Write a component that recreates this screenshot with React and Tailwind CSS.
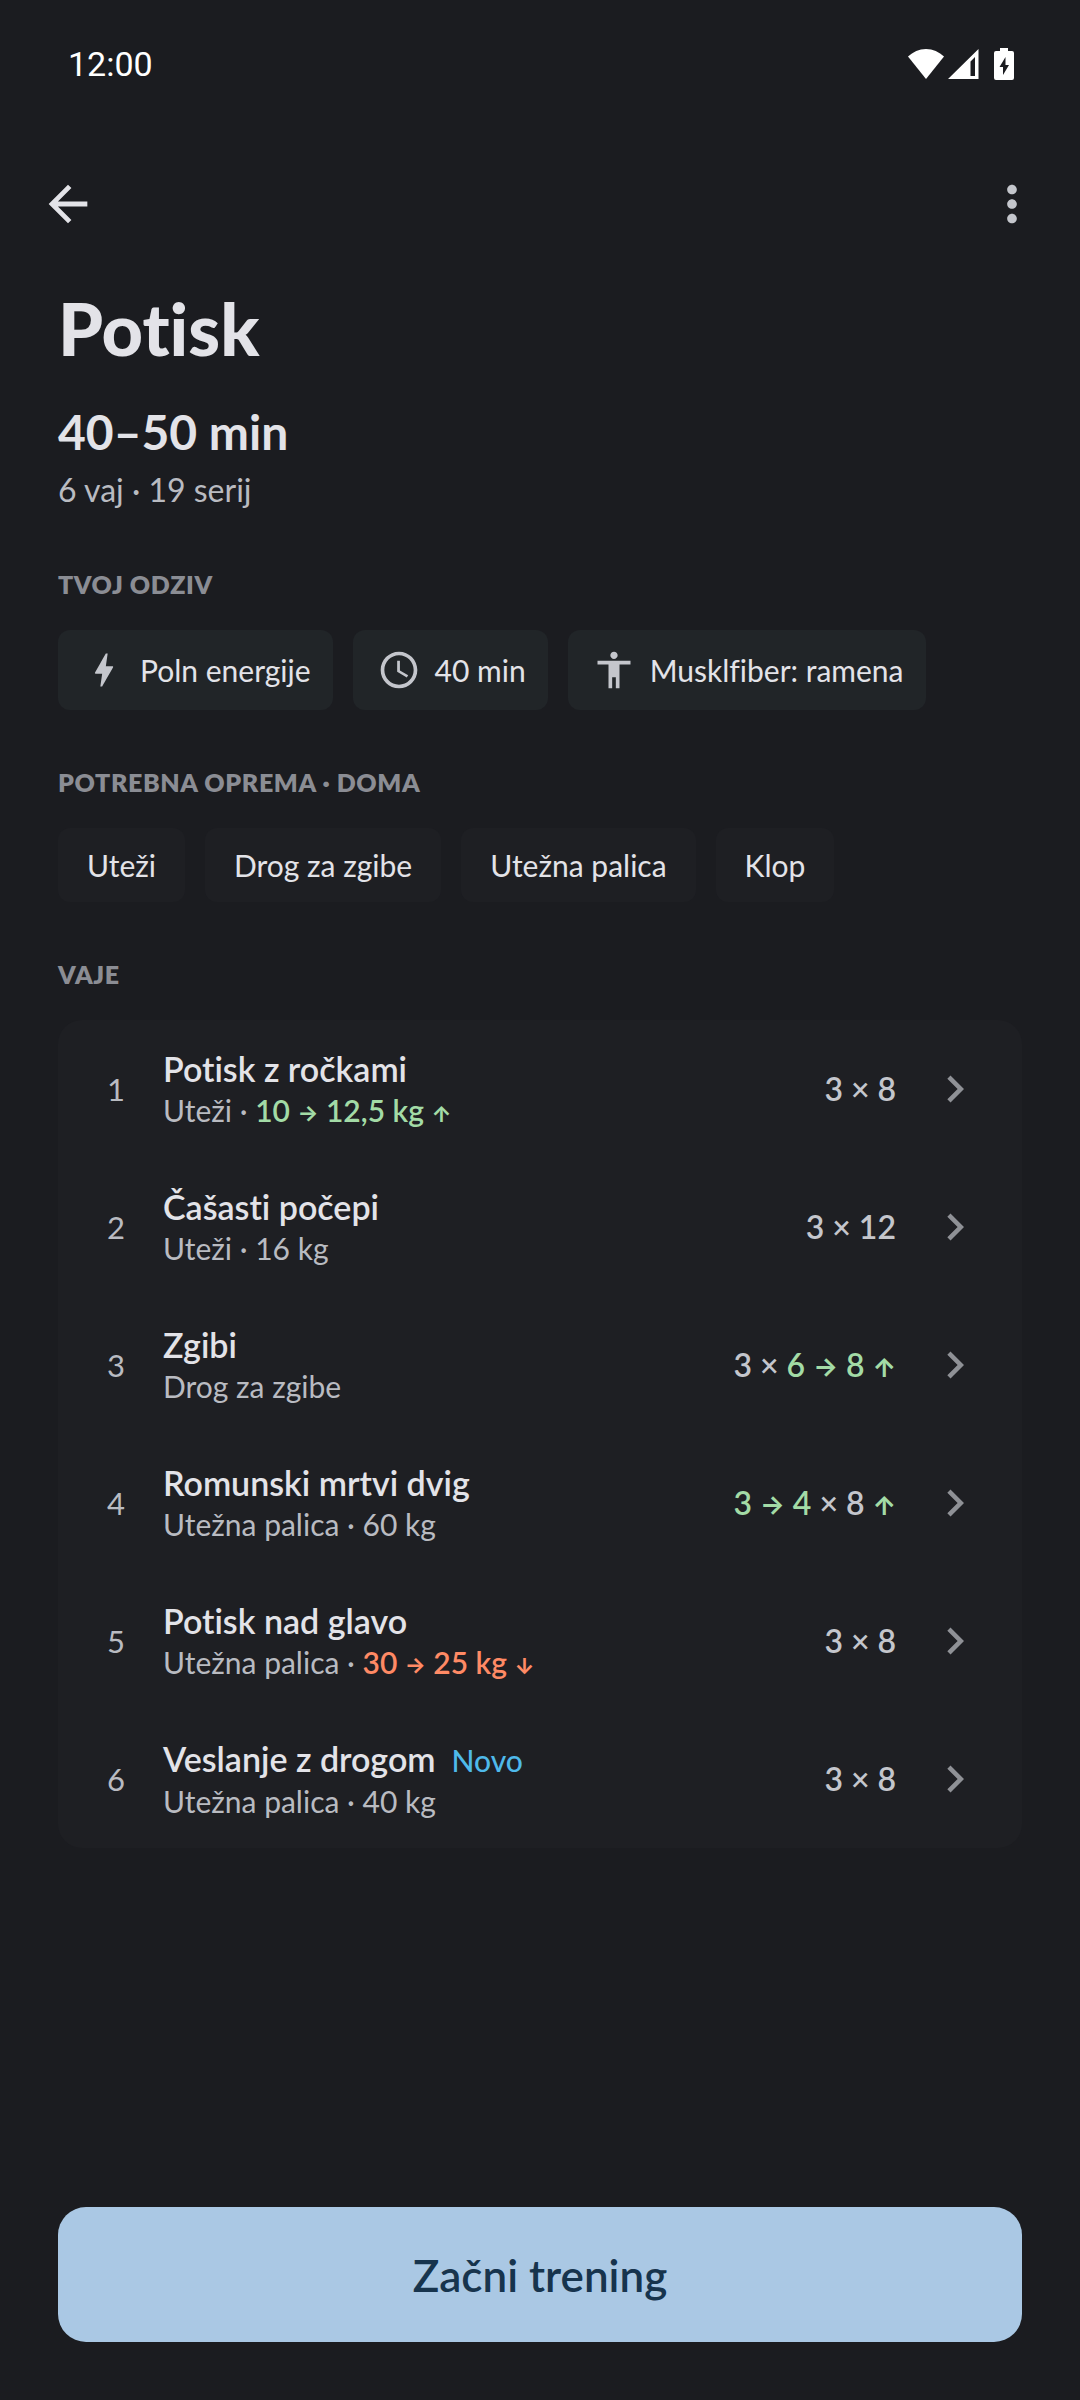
import { MdAccessibility, MdArrowBack, MdBolt, MdChevronRight, MdMoreVert, MdSchedule } from 'react-icons/md';

const feedback = [
  { icon: MdBolt, label: 'Poln energije' },
  { icon: MdSchedule, label: '40 min' },
  { icon: MdAccessibility, label: 'Musklfiber: ramena' },
];

const equipment = ['Uteži', 'Drog za zgibe', 'Utežna palica', 'Klop'];

const exercises = [
  {
    name: 'Potisk z ročkami',
    details: [{ text: 'Uteži · ' }, { text: '10 → 12,5 kg ↑', tone: 'up' }],
    sets: [{ text: '3 × 8' }],
  },
  {
    name: 'Čašasti počepi',
    details: [{ text: 'Uteži · 16 kg' }],
    sets: [{ text: '3 × 12' }],
  },
  {
    name: 'Zgibi',
    details: [{ text: 'Drog za zgibe' }],
    sets: [{ text: '3 × ' }, { text: '6 → 8 ↑', tone: 'up' }],
  },
  {
    name: 'Romunski mrtvi dvig',
    details: [{ text: 'Utežna palica · 60 kg' }],
    sets: [{ text: '3 → 4', tone: 'up' }, { text: ' × 8 ' }, { text: '↑', tone: 'up' }],
  },
  {
    name: 'Potisk nad glavo',
    details: [{ text: 'Utežna palica · ' }, { text: '30 → 25 kg ↓', tone: 'down' }],
    sets: [{ text: '3 × 8' }],
  },
  {
    name: 'Veslanje z drogom',
    isNew: true,
    details: [{ text: 'Utežna palica · 40 kg' }],
    sets: [{ text: '3 × 8' }],
  },
];

const tones = {
  up: 'font-semibold text-[#a3dba6]',
  down: 'font-semibold text-[#ff8a65]',
};

// Arrows come from Inter, the text font has none
const RichText = ({ parts, arrowSize }) =>
  parts.map((part, i) => (
    <span key={i} className={part.tone ? tones[part.tone] : ''}>
      {part.text.split(/([→↑↓])/).map((piece, j) =>
        /[→↑↓]/.test(piece) ? (
          <span
            key={j}
            className={`font-['Inter',sans-serif] leading-none font-bold [font-feature-settings:'case'] ${arrowSize}`}
          >
            {piece}
          </span>
        ) : (
          piece
        )
      )}
    </span>
  ));

const StatusBar = () => (
  <div className="flex h-[127px] items-center justify-between pr-[66px] pl-[68px] text-white">
    <span className="font-['Roboto',sans-serif] text-[34px] leading-10">12:00</span>
    <div className="flex items-center">
      {/* Wifi */}
      <svg className="h-8 w-9" viewBox="0 0 36 32" fill="currentColor">
        <path d="M18 31 0 8.500C5 4 11 1 18 1s13 3 18 7.500z" />
      </svg>
      {/* Mobile signal */}
      <svg className="ml-1 h-8 w-8" viewBox="0 0 32 32" fill="currentColor" fillRule="evenodd">
        <path d="M0 31 30.500 1v30zM22.500 28H27V9l-4.500 4.500z" />
      </svg>
      {/* Battery */}
      <svg className="ml-3.5 h-8 w-5" viewBox="0 0 20 32" fill="currentColor" fillRule="evenodd">
        <path d="M6 0h8v3h4a2 2 0 0 1 2 2v25a2 2 0 0 1-2 2H2a2 2 0 0 1-2-2V5a2 2 0 0 1 2-2h4zM11.500 9 5.500 19H9v8l6-10h-3.500z" />
      </svg>
    </div>
  </div>
);

const SectionTitle = ({ children }) => (
  <h2 className="text-[25px] leading-8 font-extrabold tracking-wide text-[#8b8d94] uppercase">{children}</h2>
);

const ExerciseRow = ({ exercise, number }) => (
  <li>
    <button type="button" className="flex h-[138px] w-full items-center px-10 text-left">
      <span className="w-9 text-center text-[31px] text-[#b9bbc1]">{number}</span>
      <div className="ml-[29px] flex-1">
        <div className="flex items-baseline gap-4 text-[34px] leading-[42px] font-semibold text-[#e3e3e8]">
          {exercise.name}
          {exercise.isNew && <span className="text-[30px] font-medium text-[#4fb9ea]">Novo</span>}
        </div>
        <div className="text-[30px] leading-10 text-[#b9bbc1]">
          <RichText parts={exercise.details} arrowSize="text-[22px]" />
        </div>
      </div>
      <span className="text-[32px] font-semibold whitespace-pre text-[#c4c6cc]">
        <RichText parts={exercise.sets} arrowSize="text-[26px]" />
      </span>
      <MdChevronRight className="ml-8 size-[54px] text-[#8f9196]" />
    </button>
  </li>
);

const App = () => {
  return (
    <div className="flex min-h-screen flex-col bg-[#1b1c20] font-['Lato',sans-serif] text-[#e3e3e8] [font-variant-ligatures:none]">
      <StatusBar />

      <header className="flex h-[154px] items-center justify-between px-[39px]">
        <button type="button" aria-label="Nazaj">
          <MdArrowBack className="size-[58px]" />
        </button>
        <button type="button" aria-label="Več možnosti">
          <MdMoreVert className="size-[58px] text-[#c4c6cc]" />
        </button>
      </header>

      <main className="px-[58px]">
        <h1 className="text-[72px] leading-[95px] font-black">Potisk</h1>
        <p className="mt-6 text-[48px] leading-[64px] font-bold">40–50 min</p>
        <p className="text-[32px] leading-[52px] text-[#b9bbc1]">6 vaj · 19 serij</p>

        <section className="mt-[52px]">
          <SectionTitle>Tvoj odziv</SectionTitle>
          <ul className="mt-[30px] flex gap-5">
            {feedback.map(({ icon: Icon, label }) => (
              <li
                key={label}
                className="flex h-20 items-center gap-3.5 rounded-xl bg-[#212528] pr-[22px] pl-6 text-[30px]"
              >
                <Icon className="size-11 text-[#c4c6cc]" />
                {label}
              </li>
            ))}
          </ul>
        </section>

        <section className="mt-14">
          <SectionTitle>Potrebna oprema · Doma</SectionTitle>
          <ul className="mt-[30px] flex gap-5">
            {equipment.map((item) => (
              <li
                key={item}
                className="flex h-[74px] items-center rounded-xl bg-[#1e1f23] px-[29px] text-[30px]"
              >
                {item}
              </li>
            ))}
          </ul>
        </section>

        <section className="mt-14">
          <SectionTitle>Vaje</SectionTitle>
          <ol className="mt-[30px] rounded-3xl bg-[#1e1f23]">
            {exercises.map((exercise, i) => (
              <ExerciseRow key={exercise.name} exercise={exercise} number={i + 1} />
            ))}
          </ol>
        </section>
      </main>

      <footer className="mt-auto px-[58px] pt-10 pb-[58px]">
        <button
          type="button"
          className="h-[135px] w-full rounded-[28px] bg-[#aac8e4] text-[44px] font-semibold text-[#17344d]"
        >
          Začni trening
        </button>
      </footer>
    </div>
  );
};

export default App;
